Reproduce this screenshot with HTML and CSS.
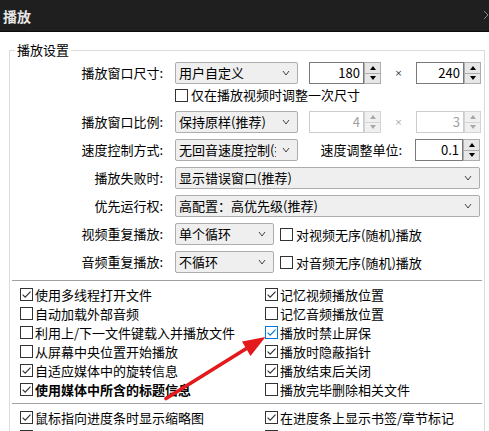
FILE: index.html
```html
<!DOCTYPE html>
<html lang="zh-CN">
<head>
<meta charset="utf-8">
<title>播放</title>
<link rel="stylesheet" href="styles.css">
</head>
<body>
<div class="titlebar">
  <span class="title">播放</span>
  <svg class="chev" width="6" height="10" viewBox="0 0 6 10"><path d="M1 1l4 4-4 4" fill="none" stroke="#8a8a8a" stroke-width="1"/></svg>
</div>

<fieldset class="group">
  <legend>播放设置</legend>

  <div class="row first">
    <span class="lbl">播放窗口尺寸:</span>
    <div class="combo w123"><span class="ctext">用户自定义</span><svg class="arr" width="8" height="6" viewBox="0 0 8 6"><path d="M1 1l3 4 3-4" fill="none" stroke="#444" stroke-width="1"/></svg></div>
    <div class="spin s1"><span class="val">180</span><span class="btns"><span class="btn"><i class="up"></i></span><span class="btn"><i class="dn"></i></span></span></div>
    <span class="times">×</span>
    <div class="spin s2"><span class="val">240</span><span class="btns"><span class="btn"><i class="up"></i></span><span class="btn"><i class="dn"></i></span></span></div>
  </div>

  <div class="chkline">
    <svg class="cb" viewBox="0 0 13 13"><rect x=".5" y=".5" width="12" height="12" fill="#fff" stroke="#333"/></svg>
    <span>仅在播放视频时调整一次尺寸</span>
  </div>

  <div class="row r3">
    <span class="lbl">播放窗口比例:</span>
    <div class="combo w123"><span class="ctext">保持原样(推荐)</span><svg class="arr" width="8" height="6" viewBox="0 0 8 6"><path d="M1 1l3 4 3-4" fill="none" stroke="#444" stroke-width="1"/></svg></div>
    <div class="spin s1 dis"><span class="val">4</span><span class="btns"><span class="btn"><i class="up"></i></span><span class="btn"><i class="dn"></i></span></span></div>
    <span class="times dis">×</span>
    <div class="spin s2 dis"><span class="val">3</span><span class="btns"><span class="btn"><i class="up"></i></span><span class="btn"><i class="dn"></i></span></span></div>
  </div>

  <div class="row">
    <span class="lbl">速度控制方式:</span>
    <div class="combo w123"><span class="ctext clip">无回音速度控制(推荐)</span><svg class="arr" width="8" height="6" viewBox="0 0 8 6"><path d="M1 1l3 4 3-4" fill="none" stroke="#444" stroke-width="1"/></svg></div>
    <span class="lbl2">速度调整单位:</span>
    <div class="spin s2"><span class="val">0.1</span><span class="btns"><span class="btn"><i class="up"></i></span><span class="btn"><i class="dn"></i></span></span></div>
  </div>

  <div class="row">
    <span class="lbl">播放失败时:</span>
    <div class="combo wfull"><span class="ctext">显示错误窗口(推荐)</span><svg class="arr" width="8" height="6" viewBox="0 0 8 6"><path d="M1 1l3 4 3-4" fill="none" stroke="#444" stroke-width="1"/></svg></div>
  </div>

  <div class="row">
    <span class="lbl">优先运行权:</span>
    <div class="combo wfull"><span class="ctext">高配置：高优先级(推荐)</span><svg class="arr" width="8" height="6" viewBox="0 0 8 6"><path d="M1 1l3 4 3-4" fill="none" stroke="#444" stroke-width="1"/></svg></div>
  </div>

  <div class="row">
    <span class="lbl">视频重复播放:</span>
    <div class="combo w99"><span class="ctext">单个循环</span><svg class="arr" width="8" height="6" viewBox="0 0 8 6"><path d="M1 1l3 4 3-4" fill="none" stroke="#444" stroke-width="1"/></svg></div>
    <svg class="cb inrow" viewBox="0 0 13 13"><rect x=".5" y=".5" width="12" height="12" fill="#fff" stroke="#333"/></svg>
    <span class="cbtext">对视频无序(随机)播放</span>
  </div>

  <div class="row">
    <span class="lbl">音频重复播放:</span>
    <div class="combo w99"><span class="ctext">不循环</span><svg class="arr" width="8" height="6" viewBox="0 0 8 6"><path d="M1 1l3 4 3-4" fill="none" stroke="#444" stroke-width="1"/></svg></div>
    <svg class="cb inrow" viewBox="0 0 13 13"><rect x=".5" y=".5" width="12" height="12" fill="#fff" stroke="#333"/></svg>
    <span class="cbtext">对音频无序(随机)播放</span>
  </div>

  <div class="sep first-sep"></div>

  <div class="checks">
    <div class="ck"><svg class="cb" viewBox="0 0 13 13"><rect x=".5" y=".5" width="12" height="12" fill="#fff" stroke="#333"/><path d="M2.6 6.6l2.6 2.6 5.3-5.6" fill="none" stroke="#333" stroke-width="1.2"/></svg><span>使用多线程打开文件</span></div>
    <div class="ck"><svg class="cb" viewBox="0 0 13 13"><rect x=".5" y=".5" width="12" height="12" fill="#fff" stroke="#333"/><path d="M2.6 6.6l2.6 2.6 5.3-5.6" fill="none" stroke="#333" stroke-width="1.2"/></svg><span>记忆视频播放位置</span></div>

    <div class="ck"><svg class="cb" viewBox="0 0 13 13"><rect x=".5" y=".5" width="12" height="12" fill="#fff" stroke="#333"/></svg><span>自动加载外部音频</span></div>
    <div class="ck"><svg class="cb" viewBox="0 0 13 13"><rect x=".5" y=".5" width="12" height="12" fill="#fff" stroke="#333"/></svg><span>记忆音频播放位置</span></div>

    <div class="ck"><svg class="cb" viewBox="0 0 13 13"><rect x=".5" y=".5" width="12" height="12" fill="#fff" stroke="#333"/></svg><span>利用上/下一文件键载入并播放文件</span></div>
    <div class="ck"><svg class="cb" viewBox="0 0 13 13"><rect x=".5" y=".5" width="12" height="12" fill="#fff" stroke="#0078d7"/><path d="M2.6 6.6l2.6 2.6 5.3-5.6" fill="none" stroke="#0078d7" stroke-width="1.2"/></svg><span>播放时禁止屏保</span></div>

    <div class="ck"><svg class="cb" viewBox="0 0 13 13"><rect x=".5" y=".5" width="12" height="12" fill="#fff" stroke="#333"/></svg><span>从屏幕中央位置开始播放</span></div>
    <div class="ck"><svg class="cb" viewBox="0 0 13 13"><rect x=".5" y=".5" width="12" height="12" fill="#fff" stroke="#333"/><path d="M2.6 6.6l2.6 2.6 5.3-5.6" fill="none" stroke="#333" stroke-width="1.2"/></svg><span>播放时隐蔽指针</span></div>

    <div class="ck"><svg class="cb" viewBox="0 0 13 13"><rect x=".5" y=".5" width="12" height="12" fill="#fff" stroke="#333"/><path d="M2.6 6.6l2.6 2.6 5.3-5.6" fill="none" stroke="#333" stroke-width="1.2"/></svg><span>自适应媒体中的旋转信息</span></div>
    <div class="ck"><svg class="cb" viewBox="0 0 13 13"><rect x=".5" y=".5" width="12" height="12" fill="#fff" stroke="#333"/><path d="M2.6 6.6l2.6 2.6 5.3-5.6" fill="none" stroke="#333" stroke-width="1.2"/></svg><span>播放结束后关闭</span></div>

    <div class="ck"><svg class="cb" viewBox="0 0 13 13"><rect x=".5" y=".5" width="12" height="12" fill="#fff" stroke="#333"/><path d="M2.6 6.6l2.6 2.6 5.3-5.6" fill="none" stroke="#333" stroke-width="1.2"/></svg><span class="bold">使用媒体中所含的标题信息</span></div>
    <div class="ck"><svg class="cb" viewBox="0 0 13 13"><rect x=".5" y=".5" width="12" height="12" fill="#fff" stroke="#333"/></svg><span>播放完毕删除相关文件</span></div>
  </div>

  <div class="sep"></div>

  <div class="checks">
    <div class="ck"><svg class="cb" viewBox="0 0 13 13"><rect x=".5" y=".5" width="12" height="12" fill="#fff" stroke="#333"/><path d="M2.6 6.6l2.6 2.6 5.3-5.6" fill="none" stroke="#333" stroke-width="1.2"/></svg><span>鼠标指向进度条时显示缩略图</span></div>
    <div class="ck"><svg class="cb" viewBox="0 0 13 13"><rect x=".5" y=".5" width="12" height="12" fill="#fff" stroke="#333"/><path d="M2.6 6.6l2.6 2.6 5.3-5.6" fill="none" stroke="#333" stroke-width="1.2"/></svg><span>在进度条上显示书签/章节标记</span></div>

    <div class="ck"><svg class="cb" viewBox="0 0 13 13"><rect x=".5" y=".5" width="12" height="12" fill="#fff" stroke="#333"/></svg><span>在播放列表中显示文件信息</span></div>
    <div class="ck"><svg class="cb" viewBox="0 0 13 13"><rect x=".5" y=".5" width="12" height="12" fill="#fff" stroke="#333"/></svg><span>在进度条上显示预览</span></div>
  </div>
</fieldset>

<svg class="arrow" width="489" height="431" viewBox="0 0 489 431">
  <line x1="166" y1="398.5" x2="248" y2="347.5" stroke="#e3191c" stroke-width="3.6" stroke-linecap="round"/>
  <polygon points="265.5,337 242,341.5 250.5,356" fill="#e3191c"/>
</svg>
</body>
</html>
```

FILE: styles.css
```css
html, body {
  margin: 0;
  padding: 0;
}

body {
  width: 489px;
  height: 431px;
  overflow: hidden;
  position: relative;
  background: #fff;
  color: #000;
  font-family: "Noto Sans CJK SC", "Microsoft YaHei", sans-serif;
  font-size: 13px;
}

.titlebar {
  height: 31px;
  border-bottom: 1px solid #0b0b0b;
  background: #1f1f1f;
  display: flex;
  align-items: center;
  padding-left: 3px;
}

.title {
  color: #e6e6e6;
  font-weight: bold;
  font-size: 14px;
  line-height: 16px;
}

.chev {
  margin-left: auto;
  margin-right: 0;
  margin-top: -2px;
}

.group {
  margin: 11px 4px 0 9px;
  border: 1px solid #dcdcdc;
  padding: 5px 0 0 0;
  min-width: 0;
}

.group legend {
  margin-left: 5px;
  padding: 0 2px;
  font-size: 13px;
  line-height: 14px;
}

.row {
  display: flex;
  align-items: center;
  height: 22px;
  margin-top: 6px;
}

.row.first {
  margin-top: 0;
}

.row.r3 {
  margin-top: 9px;
}

.lbl {
  flex: none;
  width: 153px;
  margin-right: 12px;
  text-align: right;
  line-height: 22px;
  white-space: nowrap;
}

.lbl2 {
  flex: none;
  width: 104px;
  margin-right: 13px;
  text-align: right;
  line-height: 22px;
  white-space: nowrap;
}

.combo {
  flex: none;
  box-sizing: border-box;
  height: 22px;
  border: 1px solid #adadad;
  border-radius: 2px;
  background: #efefef;
  display: flex;
  align-items: center;
  padding-left: 3px;
  padding-right: 7px;
}

.w123 { width: 123px; }
.w99 { width: 99px; }
.wfull { width: 305px; }

.ctext {
  flex: 1;
  min-width: 0;
  overflow: hidden;
  white-space: nowrap;
  line-height: 20px;
}

.ctext.clip {
  flex: none;
  width: 97px;
}

.arr {
  flex: none;
  margin-left: auto;
}

.spin {
  flex: none;
  display: flex;
  height: 22px;
}

.spin.s1 {
  width: 72px;
  margin-left: 11px;
}

.spin.s2 {
  width: 65px;
}

.val {
  flex: 1;
  box-sizing: border-box;
  border: 1px solid #7a7a7a;
  background: #fff;
  text-align: right;
  padding-right: 3px;
  line-height: 20px;
}

.btns {
  flex: none;
  width: 17px;
  display: flex;
  flex-direction: column;
}

.btn {
  flex: 1;
  box-sizing: border-box;
  border: 1px solid #adadad;
  background: #e7e7e7;
  display: flex;
  align-items: center;
  justify-content: center;
}

.btn + .btn {
  border-top: none;
}

.up {
  width: 0;
  height: 0;
  border-left: 3.5px solid transparent;
  border-right: 3.5px solid transparent;
  border-bottom: 4px solid #000;
}

.dn {
  width: 0;
  height: 0;
  border-left: 3.5px solid transparent;
  border-right: 3.5px solid transparent;
  border-top: 4px solid #000;
}

.spin.dis .val {
  border-color: #cccccc;
  color: #a0a0a0;
}

.spin.dis .btn {
  border-color: #d4d4d4;
  background: #f0f0f0;
}

.spin.dis .up {
  border-bottom-color: #a8a8a8;
}

.spin.dis .dn {
  border-top-color: #a8a8a8;
}

.times {
  flex: none;
  width: 35px;
  text-align: center;
  font-family: "DejaVu Sans", sans-serif;
  font-size: 9px;
  color: #33334d;
}

.times.dis {
  color: #aaaaaa;
}

.chkline {
  display: flex;
  align-items: center;
  height: 14px;
  margin-top: 4px;
  padding-left: 165px;
  line-height: 14px;
}

.cb {
  flex: none;
  width: 13px;
  height: 13px;
  display: block;
}

.chkline .cb {
  margin-right: 3px;
}

.cb.inrow {
  margin-left: 6px;
  margin-right: 3px;
}

.cbtext {
  white-space: nowrap;
}

.sep {
  height: 1px;
  background: #a0a0a0;
  margin: 0 2px;
}

.sep.first-sep {
  margin-top: 7px;
}

.checks {
  display: grid;
  grid-template-columns: 245px 1fr;
  padding: 4px 0 4px 10px;
}

.ck {
  display: flex;
  align-items: center;
  gap: 2px;
  height: 19px;
  white-space: nowrap;
}

.bold {
  font-weight: bold;
}

.arrow {
  position: absolute;
  left: 0;
  top: 0;
  pointer-events: none;
}
```
